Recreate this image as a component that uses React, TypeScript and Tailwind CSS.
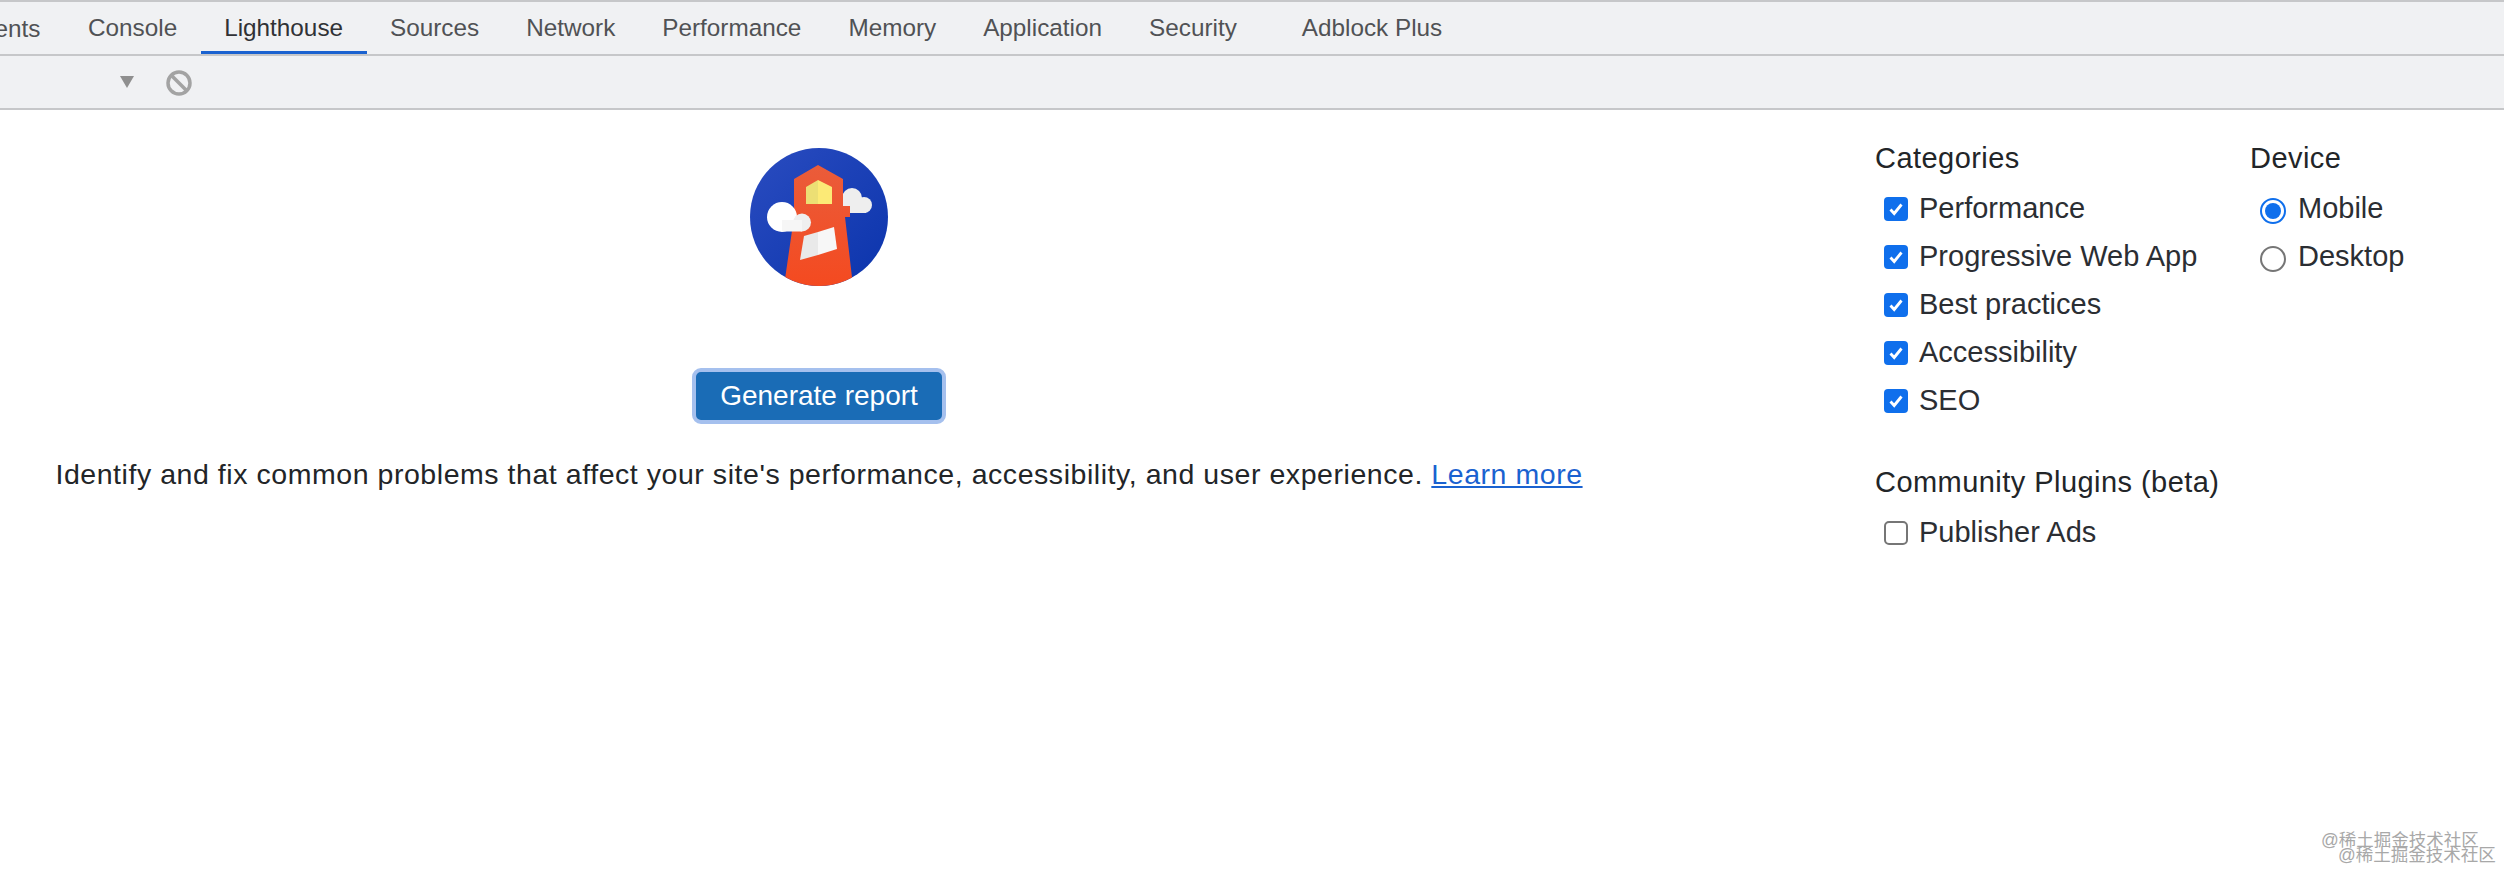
const tabs = ["Console", "Lighthouse", "Sources", "Network", "Performance", "Memory", "Application", "Security"];
const categories = ["Performance", "Progressive Web App", "Best practices", "Accessibility", "SEO"];

function Tab({ label, active }: { label: string; active?: boolean }) {
  return (
    <div className={`h-full flex items-center px-[23.5px] pt-[3px] border-b-[3px] ${active ? "border-[#1a62d0] text-[#303236]" : "border-transparent text-[#505255]"}`}>
      {label}
    </div>
  );
}

function Checkbox({ label, checked }: { label: string; checked?: boolean }) {
  return (
    <div className="h-[48px] flex items-center pl-[9px] gap-[11px]">
      {checked ? (
        <span className="w-[24px] h-[24px] rounded-[4px] bg-[#0f6fec] flex items-center justify-center">
          <svg width="16" height="16" viewBox="0 0 16 16">
            <path d="M2.5 8.5 L6.2 12.5 L13.5 3.5" fill="none" stroke="#fff" strokeWidth="2.8" />
          </svg>
        </span>
      ) : (
        <span className="w-[24px] h-[24px] rounded-[5px] bg-white border-2 border-[#767676]" />
      )}
      <span>{label}</span>
    </div>
  );
}

function Radio({ label, checked }: { label: string; checked?: boolean }) {
  return (
    <div className="h-[48px] flex items-center pl-[10px] gap-[12px]">
      <span className={`w-[26px] h-[26px] mt-[3px] rounded-full border-2 flex items-center justify-center ${checked ? "border-[#0f6fec]" : "border-[#767676]"}`}>
        {checked && <span className="w-[16px] h-[16px] rounded-full bg-[#0f6fec]" />}
      </span>
      <span>{label}</span>
    </div>
  );
}

function LighthouseLogo() {
  return (
    <svg width="138" height="138" viewBox="0 0 138 138">
      <defs>
        <clipPath id="disc">
          <circle cx="69" cy="69" r="69" />
        </clipPath>
        <linearGradient id="sky" x1="0" y1="0" x2="1" y2="1">
          <stop offset="0" stopColor="#2a4cc0" />
          <stop offset="1" stopColor="#0b34ac" />
        </linearGradient>
        <linearGradient id="tower" x1="0" y1="0" x2="0" y2="1">
          <stop offset="0" stopColor="#ea5c3a" />
          <stop offset="1" stopColor="#f44a20" />
        </linearGradient>
      </defs>
      <g clipPath="url(#disc)">
        <rect width="138" height="138" fill="url(#sky)" />
        {/* right cloud */}
        <circle cx="102" cy="50" r="10" fill="#eeeeee" />
        <circle cx="114" cy="57" r="8" fill="#eeeeee" />
        <rect x="90" y="54" width="26" height="11" fill="#eeeeee" />
        {/* tower */}
        <path d="M68 17 L93 31 L93 58 L100 58 L100 69 L95 69 L103 138 L34 138 L44 69 L44 31 Z" fill="url(#tower)" />
        {/* lantern */}
        <path d="M68 32 L56 39 L56 56 L68 56 Z" fill="#ecdf74" />
        <path d="M68 32 L82 39 L82 56 L68 56 Z" fill="#fcea76" />
        {/* left cloud */}
        <circle cx="32" cy="69" r="15" fill="#ffffff" />
        <circle cx="52" cy="74.5" r="9" fill="#efefef" />
        <rect x="32" y="72" width="20" height="11.5" fill="#f6f6f6" />
        {/* window */}
        <path d="M54 88 L68 84 L68 107 L50 112 Z" fill="#e9e9e9" />
        <path d="M68 84 L84 79 L87 101 L68 107 Z" fill="#f7f7f7" />
      </g>
    </svg>
  );
}

export default function App() {
  return (
    <div className="relative w-[2504px] h-[872px] overflow-hidden bg-white font-['Liberation_Sans',sans-serif]">
      {/* tab bar */}
      <div className="h-[56px] flex items-stretch bg-[#f0f1f3] border-t-2 border-b-2 border-[#c6c7c9] text-[24.3px] whitespace-nowrap">
        <div className="w-[64.5px] pt-[3px] flex items-center justify-end overflow-hidden text-[#505255]">
          <span className="pr-[24px]">ents</span>
        </div>
        {tabs.map((t) => (
          <Tab key={t} label={t} active={t === "Lighthouse"} />
        ))}
        <div className="ml-[18px]">
          <Tab label="Adblock Plus" />
        </div>
      </div>

      {/* toolbar */}
      <div className="h-[54px] flex items-center bg-[#f0f1f3] border-b-2 border-[#c6c7c9]">
        <svg className="ml-[119px]" width="16" height="14" viewBox="0 0 16 14">
          <path d="M1 1 L15 1 L8 13 Z" fill="#8f8f8f" />
        </svg>
        <svg className="ml-[30px] mt-[2px]" width="28" height="28" viewBox="0 0 28 28">
          <circle cx="14" cy="14" r="11" fill="none" stroke="#a3a3a3" strokeWidth="3.5" />
          <path d="M6 6 L22 22" stroke="#a3a3a3" strokeWidth="3.5" />
        </svg>
      </div>

      {/* main */}
      <div className="flex">
        <div className="w-[1638px] flex flex-col items-center pt-[38px] text-[#222528]">
          <LighthouseLogo />
          <button className="mt-[82px] h-[56px] w-[254px] rounded-[9px] border-4 border-[#a5c0ee] bg-[#1a6cb6] text-white text-[28px]">
            Generate report
          </button>
          <p className="mt-[32px] text-[28.5px] tracking-[0.55px] leading-[36px] whitespace-nowrap">
            Identify and fix common problems that affect your site's performance, accessibility, and user experience.{" "}
            <span className="text-[#1a62d0] underline">Learn more</span>
          </p>
        </div>

        <div className="ml-[237px] pt-[27px] flex text-[29px] text-[#2b2e33] whitespace-nowrap">
          <div className="w-[375px]">
            <div className="h-[44px] mb-[4px] flex items-center tracking-[0.45px] text-[#222528]">Categories</div>
            {categories.map((c) => (
              <Checkbox key={c} label={c} checked />
            ))}
            <div className="mt-[36px] h-[44px] mb-[4px] flex items-center tracking-[0.45px] text-[#222528]">Community Plugins (beta)</div>
            <Checkbox label="Publisher Ads" />
          </div>
          <div>
            <div className="h-[44px] mb-[4px] flex items-center tracking-[0.45px] text-[#222528]">Device</div>
            <Radio label="Mobile" checked />
            <Radio label="Desktop" />
          </div>
        </div>
      </div>

      {/* watermark */}
      <div className="absolute left-[2321px] top-[829px] text-[17.5px] leading-[22px] text-[#a8a8a8] whitespace-nowrap font-['Liberation_Sans','Noto_Sans_CJK_SC',sans-serif]">
        @稀土掘金技术社区
      </div>
      <div className="absolute left-[2338px] top-[844px] text-[17.5px] leading-[22px] text-[#a8a8a8] whitespace-nowrap font-['Liberation_Sans','Noto_Sans_CJK_SC',sans-serif]">
        @稀土掘金技术社区
      </div>
    </div>
  );
}
